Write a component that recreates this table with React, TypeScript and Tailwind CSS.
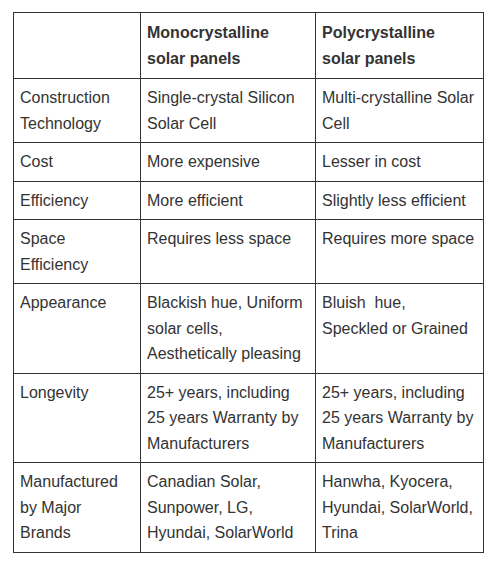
import { Fragment } from "react";

const rows: [string, string, string][] = [
  ["Construction Technology", "Single-crystal Silicon Solar Cell", "Multi-crystalline Solar Cell"],
  ["Cost", "More expensive", "Lesser in cost"],
  ["Efficiency", "More efficient", "Slightly less efficient"],
  ["Space Efficiency", "Requires less space", "Requires more space"],
  ["Appearance", "Blackish hue, Uniform solar cells, Aesthetically pleasing", "Bluish\u00a0 hue,\nSpeckled or Grained"],
  ["Longevity", "25+ years, including 25 years Warranty by Manufacturers", "25+ years, including 25 years Warranty by Manufacturers"],
  ["Manufactured by Major Brands", "Canadian Solar, Sunpower, LG, Hyundai, SolarWorld", "Hanwha, Kyocera, Hyundai, SolarWorld, Trina"],
];

const cell = "border border-[#333] px-[6px] py-[6px] align-top";
const head = "border border-[#333] px-[6px] py-[7px] align-top text-left font-bold";

export default function App() {
  return (
    <div className="min-h-screen bg-white pl-[13px] pt-[12px] font-['Liberation_Sans',Arial,sans-serif] text-[16px] leading-[25.5px] text-[#333]">
      <table className="w-[470px] table-fixed border-collapse">
        <colgroup>
          <col className="w-[127px]" />
          <col className="w-[175px]" />
          <col className="w-[168px]" />
        </colgroup>
        <thead>
          <tr>
            <th className={head}></th>
            <th className={head}>Monocrystalline solar panels</th>
            <th className={head}>Polycrystalline solar panels</th>
          </tr>
        </thead>
        <tbody>
          {rows.map((r, i) => (
            <tr key={i}>
              {r.map((t, j) => (
                <td key={j} className={cell}>
                  {t.split("\n").map((line, k) => (
                    <Fragment key={k}>
                      {k > 0 && <br />}
                      {line}
                    </Fragment>
                  ))}
                </td>
              ))}
            </tr>
          ))}
        </tbody>
      </table>
    </div>
  );
}
